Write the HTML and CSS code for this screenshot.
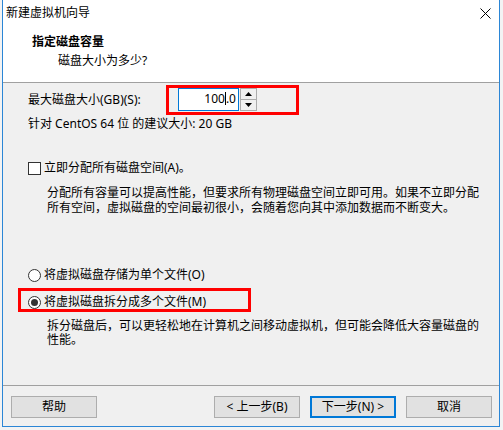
FILE: index.html
```html
<!DOCTYPE html>
<html lang="zh-CN">
<head>
<meta charset="utf-8">
<title>新建虚拟机向导</title>
<link rel="stylesheet" href="styles.css">
</head>
<body>
<div class="window">
  <div class="titlebar">
    <span class="title">新建虚拟机向导</span>
    <svg class="close" width="11" height="11" viewBox="0 0 11 11"><path d="M0.5 0.5 L10.5 10.5 M10.5 0.5 L0.5 10.5" stroke="#000" stroke-width="1" fill="none"/></svg>
  </div>
  <div class="header">
    <div class="h-title">指定磁盘容量</div>
    <div class="h-sub">磁盘大小为多少?</div>
  </div>
  <div class="content">
    <div class="size-row">
      <span class="size-label">最大磁盘大小(GB)(S):</span>
      <div class="input">100<span class="caret"></span>.0</div>
      <div class="spin">
        <div class="spin-btn"><svg width="7" height="4" viewBox="0 0 7 4"><path d="M3.5 0 L7 4 L0 4 Z" fill="#000"/></svg></div>
        <div class="spin-btn"><svg width="7" height="4" viewBox="0 0 7 4"><path d="M0 0 L7 0 L3.5 4 Z" fill="#000"/></svg></div>
      </div>
      <div class="mark mark-size"></div>
    </div>
    <div class="hint">针对 CentOS 64 位 的建议大小: 20 GB</div>
    <div class="check-row">
      <span class="checkbox"></span>
      <span class="opt-label">立即分配所有磁盘空间(A)。</span>
    </div>
    <div class="desc desc-a">
      <div class="line">分配所有容量可以提高性能，但要求所有物理磁盘空间立即可用。如果不立即分配</div>
      <div class="line">所有空间，虚拟磁盘的空间最初很小，会随着您向其中添加数据而不断变大。</div>
    </div>
    <div class="radio-row radio-first">
      <span class="radio"></span>
      <span class="opt-label">将虚拟磁盘存储为单个文件(O)</span>
    </div>
    <div class="radio-row radio-second">
      <span class="radio selected"></span>
      <span class="opt-label">将虚拟磁盘拆分成多个文件(M)</span>
      <div class="mark mark-split"></div>
    </div>
    <div class="desc desc-b">
      <div class="line">拆分磁盘后，可以更轻松地在计算机之间移动虚拟机，但可能会降低大容量磁盘的</div>
      <div class="line">性能。</div>
    </div>
  </div>
  <div class="footer">
    <button class="btn">帮助</button>
    <div class="spacer"></div>
    <button class="btn">&lt; 上一步(B)</button>
    <button class="btn primary">下一步(N) &gt;</button>
    <button class="btn">取消</button>
  </div>
</div>
</body>
</html>
```
FILE: styles.css
```css
html, body {
  margin: 0;
  padding: 0;
  background: #f3f3f3;
  width: 503px;
  height: 430px;
  overflow: hidden;
}
body {
  font-family: "Microsoft YaHei", "Noto Sans", "Noto Sans CJK SC", sans-serif;
  font-size: 12px;
  color: #000;
}
.window {
  margin-left: 2px;
  width: 496px;
  height: 426px;
  border: 1px solid #2b86d6;
  border-top: none;
  background: #f0f0f0;
  display: flex;
  flex-direction: column;
}
.titlebar {
  height: 30px;
  background: #fff;
  display: flex;
  align-items: center;
  justify-content: space-between;
  padding: 0 8px 4px 3px;
  box-sizing: border-box;
}
.title {
  line-height: 16px;
}
.close {
  display: block;
}
.header {
  background: #fff;
  border-bottom: 1px solid #a0a0a0;
  padding-top: 4px;
  box-sizing: content-box;
  height: 48px;
}
.h-title {
  font-weight: bold;
  line-height: 16px;
  padding-left: 29px;
}
.h-sub {
  line-height: 16px;
  padding-left: 55px;
  margin-top: 3px;
}
.content {
  height: 302px;
  padding-left: 25px;
  padding-top: 5px;
  box-sizing: border-box;
}
.size-row {
  position: relative;
  display: flex;
  align-items: center;
  height: 23px;
}
.size-label {
  width: 150px;
  line-height: 16px;
}
.input {
  width: 61px;
  height: 23px;
  box-sizing: border-box;
  border: 1px solid #0078d7;
  background: #fff;
  text-align: right;
  padding-right: 2px;
  line-height: 20px;
}
.caret {
  display: inline-block;
  width: 1px;
  height: 13px;
  background: #000;
  vertical-align: -2px;
}
.spin {
  margin-left: 1px;
  width: 17px;
  height: 23px;
  box-sizing: border-box;
  border: 1px solid #acacac;
  display: flex;
  flex-direction: column;
  background: #f0f0f0;
}
.spin-btn {
  flex: 1;
  display: flex;
  align-items: center;
  justify-content: center;
}
.spin-btn + .spin-btn {
  border-top: 1px solid #acacac;
}
.spin-btn svg {
  display: block;
}
.mark {
  position: absolute;
  border: 3px solid #ff0000;
  box-sizing: border-box;
  pointer-events: none;
}
.mark-size {
  left: 138px;
  top: -3px;
  width: 133px;
  height: 30px;
}
.hint {
  margin-top: 5px;
  line-height: 16px;
}
.check-row, .radio-row {
  position: relative;
  display: flex;
  align-items: center;
  height: 16px;
}
.check-row {
  margin-top: 28px;
}
.checkbox {
  width: 13px;
  height: 13px;
  box-sizing: border-box;
  border: 1px solid #333;
  background: #fff;
  margin-right: 3px;
}
.radio {
  width: 13px;
  height: 13px;
  box-sizing: border-box;
  border: 1px solid #333;
  border-radius: 50%;
  background: #fff;
  margin-right: 3px;
  display: flex;
  align-items: center;
  justify-content: center;
}
.radio.selected::after {
  content: "";
  width: 7px;
  height: 7px;
  border-radius: 50%;
  background: #333;
}
.opt-label {
  line-height: 16px;
}
.desc {
  padding-left: 19px;
}
.line {
  white-space: nowrap;
  overflow: visible;
}
.desc-a {
  margin-top: 9px;
}
.desc-a .line {
  height: 15px;
  line-height: 15px;
}
.radio-first {
  margin-top: 52px;
}
.radio-second {
  margin-top: 11px;
}
.mark-split {
  left: -10px;
  top: -6px;
  width: 233px;
  height: 24px;
}
.desc-b {
  margin-top: 9px;
}
.desc-b .line {
  height: 14px;
  line-height: 14px;
}
.footer {
  border-top: 1px solid #a0a0a0;
  flex: 1;
  display: flex;
  align-items: flex-start;
  padding: 10px 7px 0 8px;
  gap: 10px;
}
.spacer {
  flex: 1;
}
.btn {
  width: 86px;
  height: 22px;
  box-sizing: border-box;
  border: 1px solid #adadad;
  background: #e1e1e1;
  font-family: inherit;
  font-size: 12px;
  color: #000;
  padding: 0;
  line-height: 18px;
}
.btn.primary {
  border: 2px solid #0078d7;
}
```
